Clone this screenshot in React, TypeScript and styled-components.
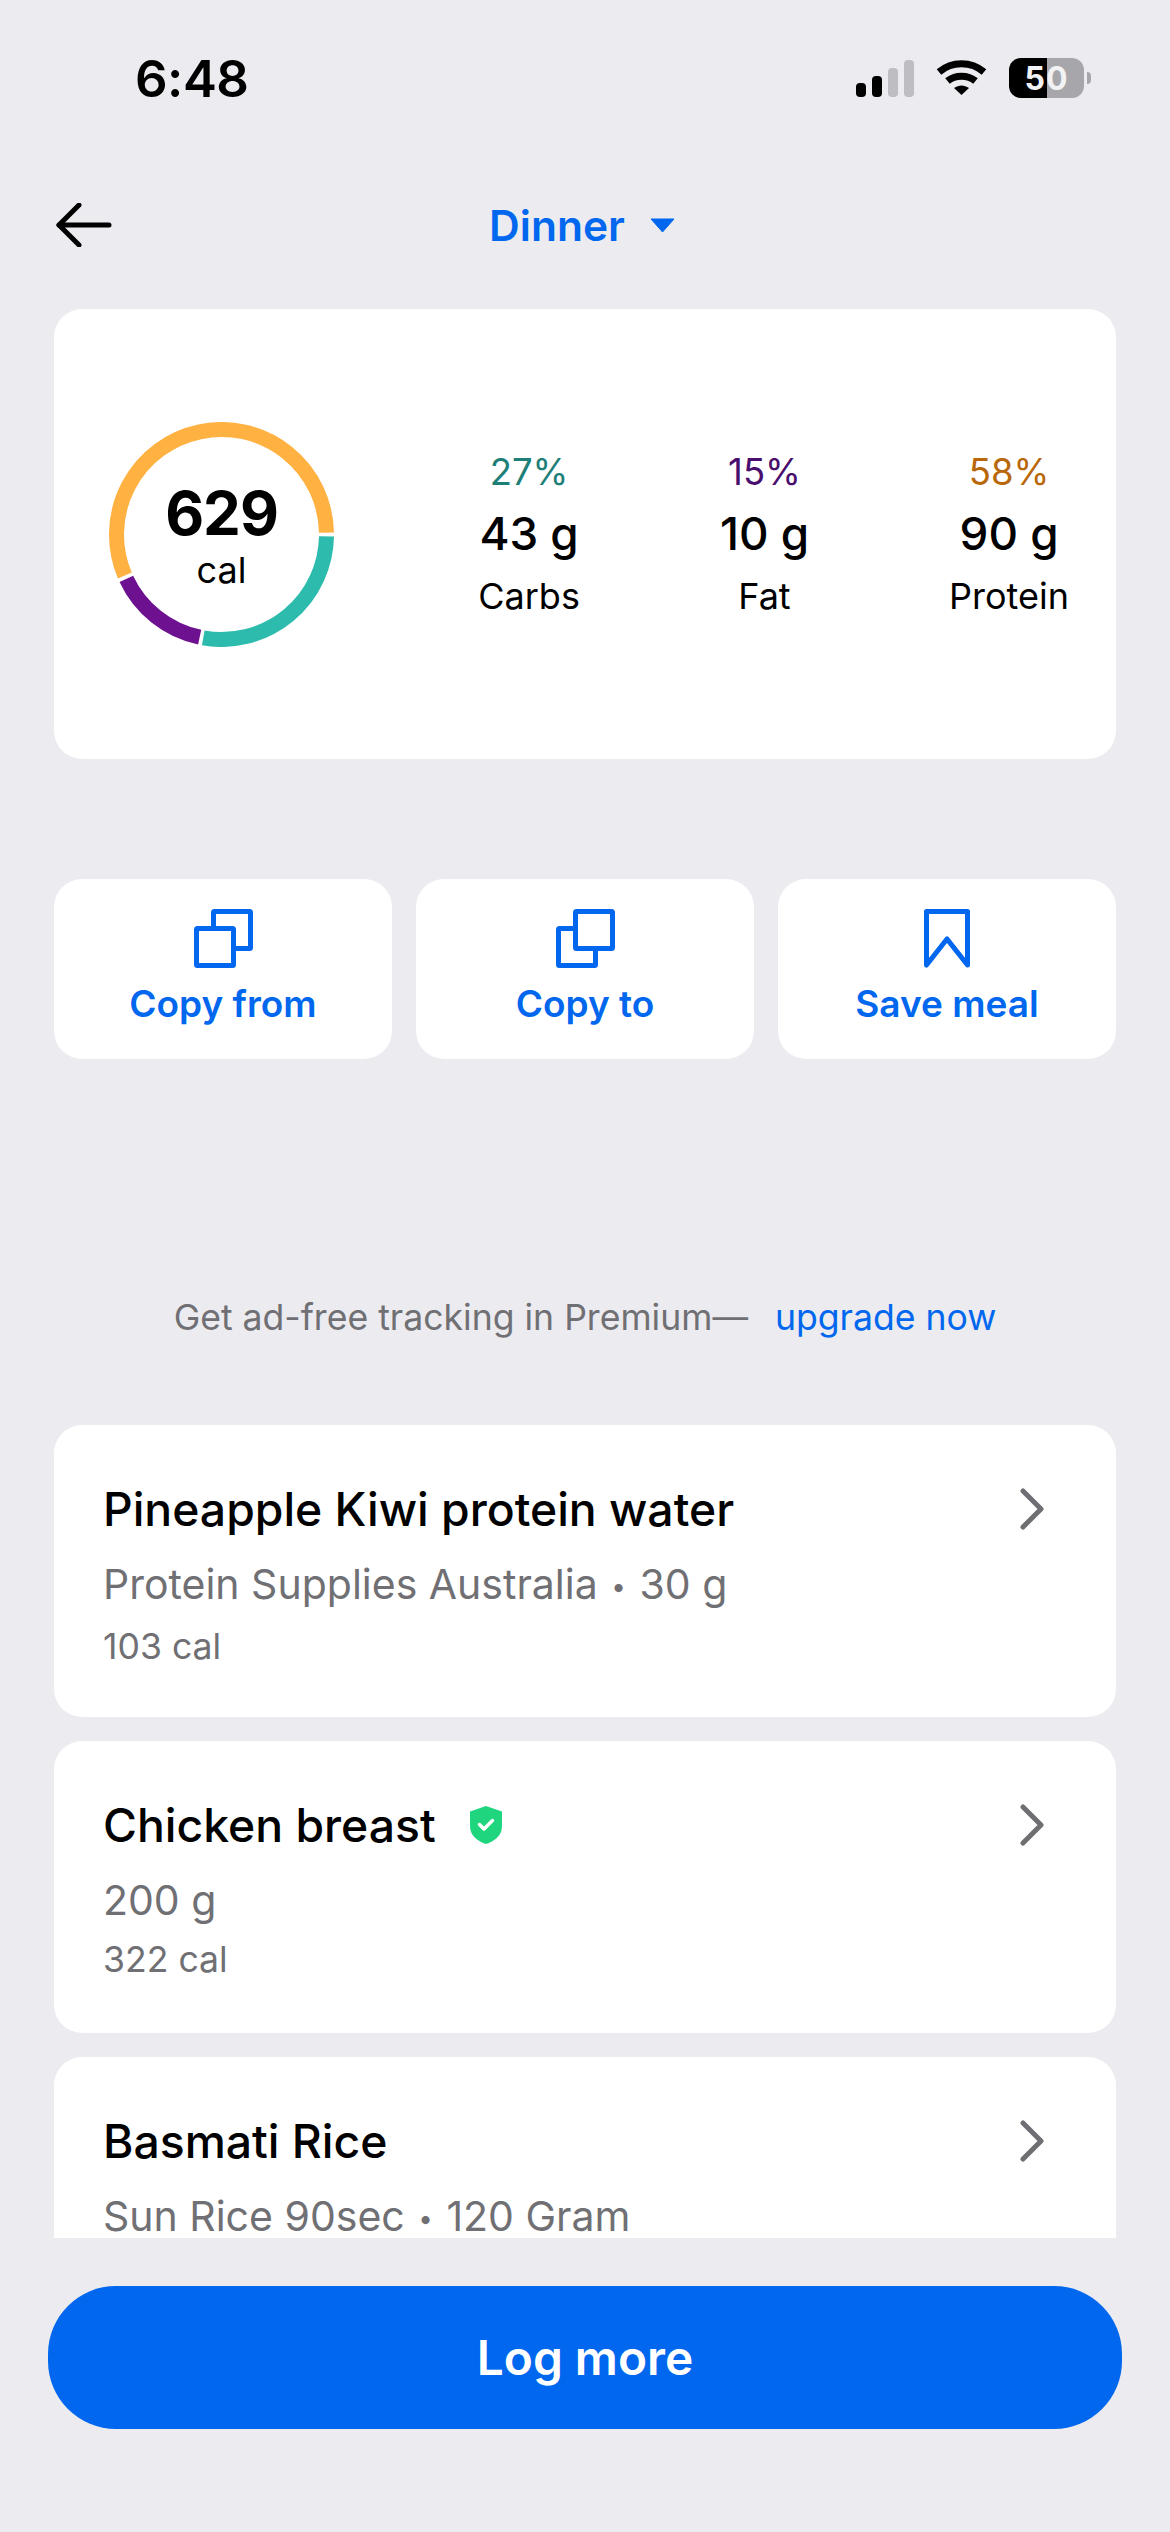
import React from "react";
import styled, { createGlobalStyle } from "styled-components";

const GlobalStyle = createGlobalStyle`
    html, body {
        margin: 0;
        padding: 0;
        background-color: #ebebf0;
    }
    * {
        box-sizing: border-box;
    }
`

const BLUE = "#0067ee";

const Page = styled.div`
    display: flex;
    flex-direction: column;
    width: 1170px;
    height: 2532px;
    overflow: hidden;
    background-color: #ebebf0;
    font-family: Inter, "Liberation Sans", sans-serif;
    color: #000;
`

const StatusBar = styled.div`
    display: flex;
    align-items: center;
    justify-content: space-between;
    height: 156px;
    padding: 0 86px 0 135px;
`

const Time = styled.span`
    font-size: 51px;
    font-weight: 600;
    letter-spacing: -0.5px;
`

const StatusIcons = styled.div`
    display: flex;
    align-items: center;
    gap: 22px;
`

const Battery = styled.div`
    position: relative;
    display: flex;
    align-items: center;
    justify-content: center;
    width: 75px;
    height: 40px;
    border-radius: 12px;
    background: linear-gradient(90deg, #000 0 38px, #a6a6ab 38px 100%);
    color: #f2f2f5;
    font-size: 32px;
    font-weight: 700;
    letter-spacing: 1px;

    &::after {
        content: "";
        position: absolute;
        right: -7px;
        top: 14px;
        width: 4px;
        height: 12px;
        border-radius: 0 6px 6px 0;
        background-color: #a6a6ab;
    }
`

const Header = styled.div`
    display: grid;
    grid-template-columns: 1fr auto 1fr;
    align-items: center;
    height: 138px;
    padding: 0 54px 0 56px;
`

const BackButton = styled.div`
    display: flex;
    align-items: center;
`

const MealPicker = styled.div`
    display: flex;
    align-items: center;
    gap: 25px;
    margin-right: 8px;
    color: ${BLUE};
    font-size: 42.5px;
    font-weight: 600;
`

const Card = styled.div`
    background-color: #fff;
    border-radius: 28px;
`

const SummaryCard = styled(Card)`
    display: flex;
    align-items: center;
    justify-content: space-between;
    height: 450px;
    margin: 15px 54px 0;
    padding: 0 47px 0 55px;
`

const Ring = styled.div`
    position: relative;
    width: 225px;
    height: 225px;
`

const RingLabel = styled.div`
    position: absolute;
    inset: 0;
    display: flex;
    flex-direction: column;
    align-items: center;
    justify-content: center;
    padding-top: 6px;
`

const Calories = styled.span`
    font-size: 60px;
    line-height: 66px;
    font-weight: 700;
    letter-spacing: -1px;
`

const CaloriesUnit = styled.span`
    font-size: 36px;
    line-height: 48px;
`

const Stats = styled.div`
    display: flex;
    gap: 140px;
`

const Stat = styled.div`
    display: flex;
    flex-direction: column;
    align-items: center;
`

const StatPercent = styled.span<{ $color: string }>`
    font-size: 36.5px;
    line-height: 62px;
    color: ${(p) => p.$color};
`

const StatValue = styled.span`
    font-size: 45.8px;
    line-height: 62px;
    font-weight: 450;
`

const StatLabel = styled.span`
    font-size: 36px;
    line-height: 62px;
`

const Actions = styled.div`
    display: grid;
    grid-template-columns: repeat(3, 1fr);
    gap: 24px;
    margin: 120px 54px 0;
`

const ActionCard = styled(Card)`
    display: flex;
    flex-direction: column;
    align-items: center;
    height: 180px;
    padding-top: 30px;
    color: ${BLUE};
`

const ActionLabel = styled.span`
    margin-top: 14px;
    font-size: 37px;
    line-height: 44px;
    font-weight: 600;
`

const Promo = styled.div`
    display: flex;
    align-items: center;
    justify-content: center;
    gap: 27px;
    height: 60px;
    margin-top: 228px;
    font-size: 35.6px;
    color: #707074;
`

const PromoLink = styled.span`
    color: ${BLUE};
`

const FoodList = styled.div`
    display: flex;
    flex-direction: column;
    gap: 24px;
    height: 813px;
    margin: 78px 54px 0;
    overflow: hidden;
`

const FoodCard = styled(Card)`
    flex: none;
    height: 292px;
    padding: 56px 72px 0 49px;
`

const FoodTitleRow = styled.div`
    display: flex;
    align-items: center;
    justify-content: space-between;
    height: 56px;
`

const FoodTitle = styled.div`
    display: flex;
    align-items: center;
    gap: 34px;
    font-size: 46.3px;
    font-weight: 450;
`

const FoodDetail = styled.div`
    margin-top: 19px;
    font-size: 41px;
    line-height: 56px;
    color: #707074;
`

const Dot = styled.span`
    font-size: 26px;
    vertical-align: 3px;
    margin: 0 2px;
`

const FoodCalories = styled.div`
    margin-top: 12px;
    font-size: 35.6px;
    line-height: 40px;
    color: #707074;
`

const LogButton = styled.div`
    display: flex;
    align-items: center;
    justify-content: center;
    height: 143px;
    margin: 48px 48px 0;
    border-radius: 68px;
    background-color: ${BLUE};
    color: #fff;
    font-size: 47.8px;
    font-weight: 600;
`

const SignalIcon = () => (
    <svg width="58" height="37" viewBox="0 0 58 37">
        <rect x="0" y="23" width="10" height="14" rx="4" fill="#000" />
        <rect x="16" y="16" width="10" height="21" rx="4" fill="#000" />
        <rect x="32" y="8" width="10" height="29" rx="4" fill="#bdbdc2" />
        <rect x="48" y="0" width="10" height="37" rx="4" fill="#bdbdc2" />
    </svg>
);

const WifiIcon = () => (
    <svg width="51" height="37" viewBox="0 0 51 37" fill="none" stroke="#000" strokeWidth="7">
        <path d="M3 12 C16 1 35 1 48 12" />
        <path d="M11.5 21 C19 14.5 32 14.5 39.5 21" />
        <path d="M18 28 L25.5 35 L33 28 C28 24.5 23 24.5 18 28 Z" fill="#000" stroke="none" />
    </svg>
);

const BackArrow = () => (
    <svg width="56" height="44" viewBox="0 0 56 44" fill="none" stroke="#000" strokeWidth="5" strokeLinecap="round" strokeLinejoin="round">
        <path d="M3 22 H53" />
        <path d="M23 2 L3 22 L23 42" />
    </svg>
);

const Caret = () => (
    <svg width="25" height="15" viewBox="0 0 25 15">
        <path d="M1 1 H24 L12.5 14 Z" fill={BLUE} stroke={BLUE} strokeWidth="1" strokeLinejoin="round" />
    </svg>
);

const CopyIcon = ({ front }: { front: "top" | "bottom" }) => {
    const top = <rect x="19.5" y="2.5" width="37" height="37" rx="1" />;
    const bottom = <rect x="2.5" y="19.5" width="37" height="37" rx="1" />;
    return (
        <svg width="59" height="59" viewBox="0 0 59 59" fill="#fff" stroke={BLUE} strokeWidth="5" strokeLinejoin="round">
            {front === "top" ? bottom : top}
            {front === "top" ? top : bottom}
        </svg>
    );
};

const BookmarkIcon = () => (
    <svg width="46" height="59" viewBox="0 0 46 59" fill="none" stroke={BLUE} strokeWidth="5" strokeLinejoin="round">
        <path d="M2.5 2.5 H43.5 V56 L23 30 L2.5 56 Z" />
    </svg>
);

const Chevron = () => (
    <svg width="24" height="42" viewBox="0 0 24 42" fill="none" stroke="#6f6f73" strokeWidth="5" strokeLinecap="round" strokeLinejoin="round">
        <path d="M3 3 L21 21 L3 39" />
    </svg>
);

const ShieldIcon = () => (
    <svg width="32" height="38" viewBox="0 0 32 38">
        <path d="M16 0 L32 5.5 V20 C32 30 24 35.5 16 38 C8 35.5 0 30 0 20 V5.5 Z" fill="#1fd67e" />
        <path d="M9.5 18.5 L14 23 L22.5 14.5" fill="none" stroke="#fff" strokeWidth="3.4" strokeLinecap="round" strokeLinejoin="round" />
    </svg>
);

// angles are degrees clockwise from 12 o'clock
const arcPath = (from: number, to: number, r: number, c: number) => {
    const point = (deg: number) => {
        const rad = (deg * Math.PI) / 180;
        return `${c + r * Math.sin(rad)} ${c - r * Math.cos(rad)}`;
    };
    const large = to - from > 180 ? 1 : 0;
    return `M${point(from)} A${r} ${r} 0 ${large} 1 ${point(to)}`;
};

const segments = [
    { from: 91, to: 190, color: "#2dbbae" },
    { from: 192, to: 245, color: "#6e1190" },
    { from: 247, to: 449, color: "#ffb142" },
];

const CalorieRing = () => (
    <Ring>
        <svg width="225" height="225" viewBox="0 0 225 225" fill="none" strokeWidth="15">
            {segments.map((s) => (
                <path key={s.color} d={arcPath(s.from, s.to, 105, 112.5)} stroke={s.color} />
            ))}
        </svg>
        <RingLabel>
            <Calories>629</Calories>
            <CaloriesUnit>cal</CaloriesUnit>
        </RingLabel>
    </Ring>
);

const stats = [
    { percent: "27%", value: "43 g", label: "Carbs", color: "#1e7f78" },
    { percent: "15%", value: "10 g", label: "Fat", color: "#4a0f6e" },
    { percent: "58%", value: "90 g", label: "Protein", color: "#b8680a" },
];

const foods = [
    { name: "Pineapple Kiwi protein water", brand: "Protein Supplies Australia", amount: "30 g", calories: "103 cal", verified: false },
    { name: "Chicken breast", brand: "", amount: "200 g", calories: "322 cal", verified: true },
    { name: "Basmati Rice", brand: "Sun Rice 90sec", amount: "120 Gram", calories: "", verified: false },
];

const App = () => {
    return (
        <Page>
            <GlobalStyle />
            <StatusBar>
                <Time>6:48</Time>
                <StatusIcons>
                    <SignalIcon />
                    <WifiIcon />
                    <Battery>50</Battery>
                </StatusIcons>
            </StatusBar>
            <Header>
                <BackButton>
                    <BackArrow />
                </BackButton>
                <MealPicker>
                    Dinner
                    <Caret />
                </MealPicker>
            </Header>
            <SummaryCard>
                <CalorieRing />
                <Stats>
                    {stats.map((s) => (
                        <Stat key={s.label}>
                            <StatPercent $color={s.color}>{s.percent}</StatPercent>
                            <StatValue>{s.value}</StatValue>
                            <StatLabel>{s.label}</StatLabel>
                        </Stat>
                    ))}
                </Stats>
            </SummaryCard>
            <Actions>
                <ActionCard>
                    <CopyIcon front="bottom" />
                    <ActionLabel>Copy from</ActionLabel>
                </ActionCard>
                <ActionCard>
                    <CopyIcon front="top" />
                    <ActionLabel>Copy to</ActionLabel>
                </ActionCard>
                <ActionCard>
                    <BookmarkIcon />
                    <ActionLabel>Save meal</ActionLabel>
                </ActionCard>
            </Actions>
            <Promo>
                Get ad-free tracking in Premium—
                <PromoLink>upgrade now</PromoLink>
            </Promo>
            <FoodList>
                {foods.map((f) => (
                    <FoodCard key={f.name}>
                        <FoodTitleRow>
                            <FoodTitle>
                                {f.name}
                                {f.verified && <ShieldIcon />}
                            </FoodTitle>
                            <Chevron />
                        </FoodTitleRow>
                        <FoodDetail>
                            {f.brand && (
                                <>
                                    {f.brand} <Dot>•</Dot>{" "}
                                </>
                            )}
                            {f.amount}
                        </FoodDetail>
                        <FoodCalories>{f.calories}</FoodCalories>
                    </FoodCard>
                ))}
            </FoodList>
            <LogButton>Log more</LogButton>
        </Page>
    );
};

export default App;
